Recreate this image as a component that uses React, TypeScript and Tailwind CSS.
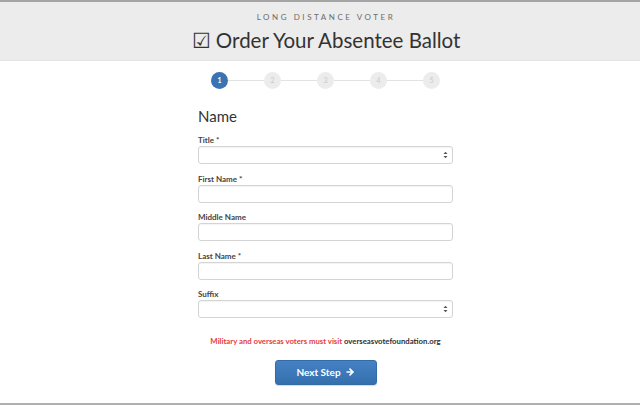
import React from 'react';
import { ArrowRight } from 'lucide-react';

const steps = [1, 2, 3, 4, 5];

const fields = [
  { label: 'Title *', kind: 'select' },
  { label: 'First Name *', kind: 'input' },
  { label: 'Middle Name', kind: 'input' },
  { label: 'Last Name *', kind: 'input' },
  { label: 'Suffix', kind: 'select' },
];

const SelectArrows = () => (
  <svg width="5" height="8" viewBox="0 0 5 8" className="absolute right-[4px] top-[4px]">
    <path d="M0.5 3 L2.5 0.8 L4.5 3 Z" fill="#555" />
    <path d="M0.5 5 L2.5 7.2 L4.5 5 Z" fill="#555" />
  </svg>
);

export default function App() {
  return (
    <div
      className="w-[640px] h-[405px] bg-white border-t-2 border-b-2 border-t-[#a4a4a4] border-b-[#b0b0b0] flex flex-col overflow-hidden"
      style={{ fontFamily: 'Lato, "Open Sans", sans-serif' }}
    >
      {/* Header */}
      <div className="h-[59px] bg-[#ececec] border-b border-[#e3e3e3] flex flex-col items-center pl-[12px] shrink-0">
        <div className="mt-[9px] text-[8px] leading-[12px] tracking-[0.32em] text-[#6b6b6b]">
          LONG DISTANCE VOTER
        </div>
        <h1 className="mt-[5px] text-[20.5px] leading-[24px] text-[#333] font-normal">
          ☑ Order Your Absentee Ballot
        </h1>
      </div>

      {/* Body */}
      <div className="ml-[198px] w-[255px] flex flex-col">
        {/* Step indicator */}
        <div className="mt-[11px] flex items-center justify-center">
          {steps.map((n, i) => (
            <React.Fragment key={n}>
              {i > 0 && <div className="w-[36px] h-px bg-[#e2e2e2]" />}
              <div
                className={
                  n === 1
                    ? 'w-[17px] h-[17px] rounded-full bg-[#3b73b2] text-white text-[7px] font-bold flex items-center justify-center'
                    : 'w-[17px] h-[17px] rounded-full bg-[#ececec] text-[#c9c9c9] text-[7px] flex items-center justify-center'
                }
              >
                {n}
              </div>
            </React.Fragment>
          ))}
        </div>

        <h2 className="mt-[18px] mb-[10px] text-[15px] leading-[18px] text-[#333] font-normal">Name</h2>

        {fields.map((f) => (
          <div key={f.label} className="flex flex-col mb-[9.5px]">
            <label className="text-[8px] leading-[11px] font-bold text-[#444]">{f.label}</label>
            <div className="relative h-[18px] rounded-[3px] border border-[#d4d4d4] bg-white shadow-[inset_0_1px_1px_rgba(0,0,0,0.05)]">
              {f.kind === 'select' && <SelectArrows />}
            </div>
          </div>
        ))}

        <p className="mt-[8px] text-center text-[7.75px] leading-[10px] font-bold text-[#e2403e]">
          Military and overseas voters must visit <span className="text-[#2f2f2f]">overseasvotefoundation.org</span>
        </p>

        <div className="mt-[14px] flex justify-center">
          <button className="w-[102px] h-[25px] rounded-[3px] bg-gradient-to-b from-[#4581c4] to-[#3570ae] border border-[#336ba6] text-white text-[10px] font-bold flex items-center justify-center gap-[4px] shadow-[0_1px_1px_rgba(0,0,0,0.15)]">
            Next Step
            <ArrowRight size={10} strokeWidth={4} />
          </button>
        </div>
      </div>
    </div>
  );
}
